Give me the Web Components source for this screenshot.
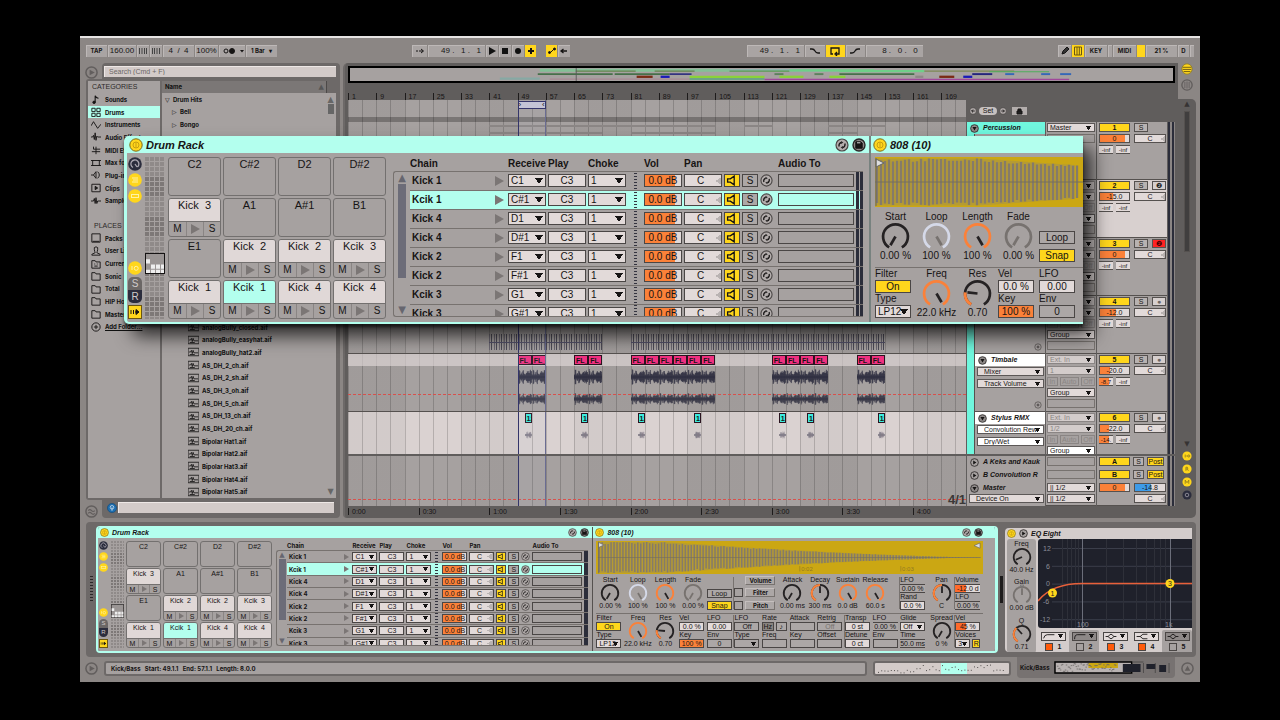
<!DOCTYPE html>
<html lang="en">
<head>
<meta charset="utf-8">
<title>Live set</title>
<style>
  body { margin: 0; background: #000; font-family: "Liberation Sans", Arial, sans-serif; }
</style>
</head>
<body>
<app-window></app-window>
<script>
const BASE = `
  *, *::before, *::after { box-sizing: border-box; }
  :host { display: block; font: 7px/9px "Liberation Sans", Arial, sans-serif; color: #161414; --win: #8b8684; --panel: #a6a1a0; --edge: #6d6968; --deep: #605d5c; --box: #e2dad9; --aqua: #b3ffee; --yel: #ffd61c; --org: #fb8139; }
  button, select, input { font: inherit; color: inherit; margin: 0; padding: 0; border: 0; border-radius: 0; background: none; min-width: 0; display: block; }
  button { text-align: center; white-space: nowrap; overflow: hidden; }
  select { appearance: none; white-space: nowrap; overflow: hidden; }
  svg { display: block; }
  .b { font-family: Inter, "Liberation Sans", sans-serif; font-weight: 700; font-size: 6px; }
`;
const ARROW = size => `conic-gradient(from -34deg at 50% 100%, #161414 68deg, #0000 0) no-repeat right 3px center / ${size}`;

function define(name, css, html) {
  customElements.define(name, class extends HTMLElement {
    connectedCallback() {
      if (this.shadowRoot) return;
      this.attachShadow({ mode: 'open' });
      const t = document.createElement('template');
      t.innerHTML = `<style>${BASE}${css}</style>${html(this)}`;
      this.shadowRoot.append(t.content.cloneNode(true));
    }
  });
}
const rep = (n, f) => Array.from({ length: n }, (_, i) => f(i)).join('');
let seed = 7;
const rnd = () => (seed = (seed * 16807) % 2147483647) / 2147483647;
const S = (box, body, extra = '') => `<svg viewBox="0 0 ${box}" ${extra} fill="none" stroke="#161414" aria-hidden="true">${body}</svg>`;

/* Round status lamps used in device headers and side strips. */
const LAMPS = {
  power: '<circle cx="7" cy="7" r="6.2" fill="#ffd61c" stroke="#7b6a1c"/><circle cx="7" cy="7" r="3" stroke="#c79f10"/><path d="M7 4.5v5" stroke="#c79f10"/>',
  macro: '<circle cx="7" cy="7" r="6.8" fill="#2b2d3d" stroke="none"/><path d="M5 10.5A4 4 0 1 1 9.5 10M7 7l2 3" stroke="#aaa6b0" stroke-width="1.3"/>',
  list: '<circle cx="7" cy="7" r="6.8" fill="#ffd61c" stroke="none"/><path d="M4 5h6M5 7h5M4 9h6" stroke="#fff2a6"/>',
  bar: '<circle cx="7" cy="7" r="6.8" fill="#ffd61c" stroke="none"/><rect x="3.5" y="5.5" width="7" height="3" stroke="#fff2a6"/>',
  io: '<circle cx="7" cy="7" r="6.8" fill="#ffd61c" stroke="none"/><path d="M4 5v4" stroke="#fff2a6"/><circle cx="8.2" cy="7.3" r="2" stroke="#fff2a6"/>',
  swap: '<circle cx="7" cy="7" r="6" fill="#b3adac" stroke="#4a4645" stroke-width="1.2"/><path d="M4.2 8.5a3 3 0 0 1 2-4M9.8 5.5a3 3 0 0 1-2 4" stroke-width="1.4"/><path d="M6 3l2.4 1.6L6 6zM8 8L5.6 9.4 8 11z" fill="#2b2828" stroke="none"/>',
  save: '<circle cx="7" cy="7" r="6" fill="#8d8887" stroke="#2b2828" stroke-width="1.4"/><path d="M3.8 3.8h5l1.4 1.4v5H3.8z" fill="#161414"/><path d="M5 4.8h3.4" stroke="#ddd"/>',
  play: '<circle cx="7" cy="7" r="6" fill="#a6a1a0" stroke="#2b2828" stroke-width="1.3"/><path d="M5 3.8l5 3.2-5 3.2z" fill="#161414" stroke="none"/>',
  down: '<circle cx="7" cy="7" r="6" fill="#8d8887" stroke="#2b2828" stroke-width="1.3"/><path d="M3.8 4.8h6.4L7 10z" fill="#161414" stroke="none"/>',
  plus: '<circle cx="7" cy="7" r="5.6" stroke="#3b3837"/><path d="M7 4.4v5.2M4.4 7h5.2"/>',
  left: '<circle cx="7" cy="7" r="5.8" fill="#b3adac" stroke="#3b3837"/><path d="M10 7H5M7 4.5L4.5 7 7 9.500" stroke-width="1.6"/>',
  right: '<circle cx="7" cy="7" r="5.8" fill="#b3adac" stroke="#3b3837"/><path d="M4 7h5M7 4.5L9.500 7 7 9.500" stroke-width="1.6"/>',
  ghost: '<circle cx="7" cy="7" r="6" fill="#8b8684" stroke="#625e5d" stroke-width="1.6"/><path d="M5 4l5.500 3L5 10z" fill="#625e5d" stroke="none"/>',
  wave: '<circle cx="7" cy="7" r="6" fill="#8b8684" stroke="#625e5d" stroke-width="1.6"/><path d="M3.5 6q1.700-2 3.500 0t3.500 0M3.500 9q1.700-2 3.500 0t3.500 0" stroke="#625e5d" stroke-width="1.300"/>',
  up: '<circle cx="7" cy="7" r="6" fill="#8b8684" stroke="#625e5d" stroke-width="1.6"/><path d="M7 4l3 5.500H4z" fill="#625e5d" stroke="none"/>',
  session: '<circle cx="7" cy="7" r="6" fill="#8b8684" stroke="#625e5d" stroke-width="1.6"/><path d="M4.500 3.500v7M7 3v8M9.500 3.500v7" stroke="#625e5d"/>',
  arrange: '<circle cx="7" cy="7" r="6" fill="#ffd61c" stroke="#8b7a2a" stroke-width="1"/><path d="M2 5h10M2 7.500h10M3 10h8" stroke="#5c4f14"/>',
  lampI: '<circle cx="7" cy="7" r="6.400" fill="#ffd61c" stroke="none"/><path d="M4.500 5v4M6 7h2" stroke="#7b6a1c"/><circle cx="9.500" cy="7" r="1.500" stroke="#7b6a1c"/>',
  lampR: '<circle cx="7" cy="7" r="6.400" fill="#ffd61c" stroke="none"/><path d="M5.500 9.500v-5h2q1.500 1.200 0 2.500h-2M7.500 7l1.500 2.500" stroke="#7b6a1c"/>',
  lampM: '<circle cx="7" cy="7" r="6.400" fill="#ffd61c" stroke="none"/><path d="M4.500 9.500v-5L7 8l2.500-3.500v5" stroke="#7b6a1c"/>',
  lampD: '<circle cx="7" cy="7" r="6.400" fill="#2b2d3d" stroke="none"/><circle cx="7" cy="7" r="2.500" stroke="#aaa6b0"/>',
  plug: '<circle cx="7" cy="7" r="6.400" fill="#1f6fb0" stroke="#174d7c"/><circle cx="7" cy="6" r="2.500" stroke="#dce9f4"/><path d="M7 6v5" stroke="#dce9f4"/>'
};
define('lamp-icon', `:host { flex: none; width: 11px; height: 11px; } svg { width: 100%; height: 100%; }`,
  el => S('14 14', LAMPS[el.getAttribute('kind')] || ''));

/* Rotary dial with its label above and its value below. */
define('dial-knob', `
  :host { text-align: center; white-space: nowrap; font-size: var(--fs, 7px); line-height: var(--lh, 8px); }
  div, output { display: block; height: var(--lh, 8px); overflow: visible; margin: 0 -6px; }
  svg { width: var(--knob, 18px); height: var(--knob, 18px); margin: 0 auto; overflow: visible; }`,
  el => {
    const v = +el.getAttribute('val'), lit = el.hasAttribute('lit');
    const tone = lit && v >= 100 ? '#fb8139' : el.getAttribute('tone') || '#252223';
    const arc = 'M5.300 18.100A9.200 9.200 0 1 1 14.700 18.100';
    return `<div>${el.getAttribute('label')}</div>` + S('20 20',
      `<path d="${arc}" stroke="${tone}" stroke-width="2"/>` +
      (lit && v < 100 ? `<path d="${arc}" pathLength="100" stroke-dasharray="${v} 200" stroke="#fb8139" stroke-width="2.200"/>` : '') +
      (el.hasAttribute('centre') ? '<path d="M8 -1h4l-2 3z" stroke="#777"/>' : '') +
      `<path d="M10 10V2.500" transform="rotate(${-150 + 3 * v} 10 10)" stroke="${el.hasAttribute('dim') ? '#77726f' : '#252223'}" stroke-width="2"/>`)
      + `<output>${el.getAttribute('value')}</output>`;
  });

/* ---------- transport bar ---------- */
define('tool-bar', `
  :host { display: flex; align-items: center; padding: 0 6px; height: 25px; background: var(--win); }
  div { display: flex; gap: 1px; }
  i { flex: 136 1 0; } i.w { flex-grow: 178; }
  button { height: 12px; line-height: 12px; background: #a9a4a3; box-shadow: inset 1px 1px #bdb8b7; font-size: 8px; display: flex; align-items: center; justify-content: center; }
  button.b { font-size: 6px; font-family: Inter, sans-serif; }
  button.y { background: var(--yel); box-shadow: none; }
  svg { width: 10px; height: 10px; }
  pre { font: inherit; margin: 0; }
`, () => {
  const b = (w, t, c = '', l = '') => `<button class="${c}" style="width:${w}px"${l ? ` aria-label="${l}"` : ''}>${t}</button>`;
  const g = d => S('10 10', d);
  return `<div>${b(21, 'TAP', 'b')}${b(28, '160.00')}${b(12, g('<path d="M1.500 2v6M4 2v6M6.500 2v6M8.500 2v6" stroke="#444"/>'), '', 'Nudge down')}${b(12, g('<path d="M1.500 2v6M3.500 2v6M6 2v6M8.500 2v6" stroke="#444"/>'), '', 'Nudge up')}${b(31, '4 &nbsp;/ &nbsp;4')}${b(23, '100%')}${b(26, S('26 10', '<circle cx="7" cy="5" r="2"/><circle cx="13" cy="5" r="2.500" fill="#161414"/><path d="M21 4h4l-2 2.500z" fill="#161414" stroke="none"/>', 'style="width:26px"'), '', 'Metronome')}${b(31, '1 Bar &nbsp; ▾', 'b')}</div>
  <i></i>
  <div>${b(15, g('<path d="M1 5h2m1 0h4M6 3l2.500 2L6 7"/>'), '', 'Follow')}${b(57, '<pre>    49 .   1 .   1</pre>')}${b(12, g('<path d="M2 1l7 4-7 4z" fill="#111" stroke="none"/>'), '', 'Play')}${b(12, g('<path d="M2 2h6v6H2z" fill="#111" stroke="none"/>'), '', 'Stop')}${b(12, g('<circle cx="5" cy="5" r="3" fill="#111" stroke="none"/>'), '', 'Record')}${b(11, g('<path d="M5 2v6M2 5h6" stroke-width="2"/>'), 'y', 'Overdub')}<span style="width:8px"></span>${b(11, g('<path d="M3 7L7 3"/><circle cx="2.500" cy="6.500" r="1" fill="#111"/><circle cx="7.500" cy="3" r="1" fill="#111"/>'), 'y', 'Automation arm')}${b(12, g('<path d="M2 5h6M4.500 3L2 5l2.500 2" stroke-width="1.300"/>'), '', 'Re-enable automation')}</div>
  <i class="w"></i>
  <div>${b(57, '<pre>    49 .   1 .   1</pre>')}${b(20, g('<path d="M0 3h2q2 0 3 2t3 2h2" stroke-width="1.300"/>'), '', 'Punch in')}${b(19, g('<path d="M3 8H1V2h8v6H6M7 6L5 8l2 2" stroke-width="1.300"/>'), 'y', 'Loop')}${b(19, g('<path d="M0 7h2q2 0 3-2t3-2h2" stroke-width="1.300"/>'), '', 'Punch out')}${b(57, '<pre>     8 .   0 .   0</pre>')}</div>
  <i></i>
  <div>${b(13, g('<path d="M2 8l1-3 4-4 2 2-4 4z" fill="#333"/>'), '', 'Draw')}${b(12, g('<path d="M1.500 1h7v8h-7zM4 1v5M6.300 1v5M4 6v3M6.300 6v3" stroke="#6b5710"/>'), 'y', 'Keyboard')}${b(22, 'KEY', 'b')}${b(4, '', '', 'Key in')}${b(23, 'MIDI', 'b')}${b(8, '', 'y', 'Load')}${b(31, '21 %', 'b')}${b(11, 'D', 'b')}${b(4, '', '', 'In')}</div>`;
});

/* ---------- browser ---------- */
const CAT = {
  note: '<path d="M5 10V2q1 3 4 3" stroke-width="1.300"/><circle cx="3.700" cy="10" r="1.500" fill="#161414"/>',
  drum: '<path d="M1 1.500h4v4H1zM7 1.500h4v4H7zM1 7.500h4v4H1zM7 7.500h4v4H7z"/>',
  inst: '<path d="M0 7L3 2l5 8 4-5"/>',
  fx: '<path d="M0 6h2l1-2 1 5 1-8 1 9 1-5 1 1h4"/>',
  midi: '<path d="M1 8h10M3 5h8M6 2v9M3 2v3"/>',
  max: '<path d="M2 3h8v6H2zM0 3h3M0 9h3M9 3h3M9 9h3"/>',
  plug: '<path d="M0 6h3l3-4v8L3 6M8 2q4 4 0 8"/>',
  clip: '<path d="M1 1.500h10v9H1z"/><path d="M5 4l3 2-3 2z" fill="#161414"/>',
  samp: '<path d="M0 6h3l1-3 1 6 1-7 1 7 1-3h4"/>',
  pack: '<path d="M1 1h10v10H1zM2 10h8" />',
  user: '<path d="M6 1q-3 0-2 3.500Q4.500 7 5 8L1 10v1h10v-1L7 8q.5-1 1-3.500Q9 1 6 1z"/>',
  cur: '<path d="M1 2h4l1 1.500h5V11H1zM4 6h1m2 0h1M4 8.500h4"/>',
  fold: '<path d="M1 2h4l1 1.500h5V11H1z"/>',
  add: '<circle cx="6" cy="6" r="5"/><path d="M6 3.500v5M3.500 6h5"/>',
  file: '<path d="M0 1.500h13v9H0z"/><path d="M1 6h2l1-2 1 4 1-4 1 3h5M2 9h6"/>'
};
define('browser-pane', `
  :host { display: grid; grid-template-columns: 1fr; grid-template-rows: 16px 1fr 18px; padding: 0 3px 0 6px; color: #111; }
  .top, .foot { display: grid; grid-template-columns: 16px 1fr; }
  .top lamp-icon, .foot lamp-icon { width: 13px; height: 13px; margin-left: -1px; }
  .tab { background: var(--edge); border-radius: 4px 4px 0 0; padding: 3px 4px 2px 2px; }
  input { display: block; width: 100%; height: 11px; background: #d3cbc9; padding: 0 5px; box-shadow: inset 1px 1px #eee8e6; line-height: 11px; }
  input::placeholder { color: #6b6665; opacity: 1; }
  .mid { background: var(--edge); padding: 2px 4px 2px 2px; display: grid; grid-template-columns: 72px 1fr; gap: 2px; border-radius: 3px 0 0 3px; }
  .cats, .files { background: var(--panel); display: flex; flex-direction: column; min-width: 0; }
  h3 { font: 7px/12px "Liberation Sans", sans-serif; margin: 0; padding-left: 4px; color: #2c2929; }
  ul { list-style: none; margin: 0; padding: 0; display: flex; flex-direction: column; }
  .cats ul { height: 114px; } .cats ul.pl { height: 101px; } .cats h3.p { margin-top: 13px; padding-left: 6px; }
  li { flex: 1 1 0; display: flex; align-items: center; gap: 4px; padding-left: 3px; white-space: nowrap; min-height: 0; line-height: 9px; }
  li svg { width: 10px; height: 10px; flex: none; }
  li.on { background: var(--aqua); }
  .head { display: grid; grid-template-columns: 1fr 10px; height: 12px; line-height: 12px; background: #7b7776; padding-left: 3px; }
  .head span + span { border-left: 1px solid #4c4948; background: var(--edge); }
  .head em { float: right; font: 7px/12px "DejaVu Sans"; color: #555; margin-right: 2px; }
  .body { flex: 1; display: grid; grid-template-columns: 1fr 11px; }
  .body li { gap: 3px; } .body li i { font-style: normal; width: 5px; font-family: "DejaVu Sans"; font-weight: 400; }
  .l1 { padding-left: 10px; } .l3 { padding-left: 26px; } .l3 svg { width: 11px; }
  .gap { flex: 15 1 0; }
  .bar { display: flex; flex-direction: column; align-items: center; color: #666; font: 8px/9px "DejaVu Sans"; padding: 2px 0; }
  .bar b { width: 6px; height: 10px; background: #666; } .bar span:last-child { margin-top: auto; }
  .foot .tab { border-radius: 0 0 4px 4px; padding: 3px 6px 4px 3px; display: grid; grid-template-columns: 13px 1fr; }
  .foot .tab lamp-icon { width: 10px; height: 10px; margin: 1px 0 0 2px; } .foot { margin-top: -1px; }
  .foot > lamp-icon { align-self: end; }
`, () => {
  const li = (k, t, c = '') => `<li class="b ${c}">${S('12 12', CAT[k], 'stroke-width="1.100"')}${t}</li>`;
  const f = t => `<li class="b l3">${S('13 12', CAT.file)}${t}</li>`;
  return `<div class="top"><lamp-icon kind="ghost" style="align-self:end"></lamp-icon><div class="tab"><input type="search" placeholder="Search (Cmd + F)" aria-label="Search"></div></div>
  <div class="mid"><div class="cats"><h3>CATEGORIES</h3><ul>${li('note', 'Sounds')}${li('drum', 'Drums', 'on')}${li('inst', 'Instruments')}${li('fx', 'Audio Effects')}${li('midi', 'MIDI Effects')}${li('max', 'Max for Live')}${li('plug', 'Plug-ins')}${li('clip', 'Clips')}${li('samp', 'Samples')}</ul>
  <h3 class="p">PLACES</h3><ul class="pl">${li('pack', 'Packs')}${li('user', 'User Library')}${li('cur', 'Current')}${li('fold', 'Sonic')}${li('fold', 'Total')}${li('fold', 'HIP Hop')}${li('fold', 'Master')}${li('add', '<u>Add Folder...</u>')}</ul></div>
  <div class="files"><div class="head b"><span>Name<em>▲</em></span><span></span></div><div class="body"><ul>
  <li class="b"><i>▽</i>Drum Hits</li><li class="b l1"><i>▷</i>Bell</li><li class="b l1"><i>▷</i>Bongo</li><li class="gap"></li>
  ${['analogBully_closed.aif', 'analogBully_easyhat.aif', 'analogBully_hat2.aif', 'AS_DH_2_ch.aif', 'AS_DH_2_sh.aif', 'AS_DH_3_oh.aif', 'AS_DH_5_ch.aif', 'AS_DH_13_ch.aif', 'AS_DH_20_ch.aif', 'Bipolar Hat1.aif', 'Bipolar Hat2.aif', 'Bipolar Hat3.aif', 'Bipolar Hat4.aif', 'Bipolar Hat5.aif'].map(f).join('')}
  </ul><div class="bar"><span>▲</span><b></b><span>▼</span></div></div></div></div>
  <div class="foot"><lamp-icon kind="wave"></lamp-icon><div class="tab"><lamp-icon kind="plug"></lamp-icon><input aria-label="Preview"></div></div>`;
});

/* ---------- arrangement ---------- */
const LANE = `
  .lane { position: relative; display: grid; grid-template-columns: repeat(175, minmax(0, 1fr)); grid-template-rows: 100%; min-width: 0; overflow: hidden; }
  .lane > * { grid-row: 1; }
  .grid { background: repeating-linear-gradient(to right, #0000002c 0 1px, #0000 1px 2.286%), repeating-linear-gradient(to right, #00000009 0 9.143%, #0000 9.143% 18.286%), var(--lane, #a6a1a0); }
  .sel { grid-column: 49 / 57; border-left: 1px solid #34356a; border-right: 1px solid #6a6c92; background: #b8c0e012; z-index: 2; }
`;
define('track-mixer', `
  :host { display: grid; grid-template-columns: 78px 50px 70px 7px; column-gap: 1px; background: var(--deep); padding-left: 1px; min-width: 0; }
  :host > div { min-width: 0; }
  .name { display: grid; grid-template-columns: 1fr; background: var(--panel); align-content: start; }
  .name.kid { grid-template-columns: 8px 1fr; align-content: stretch; }
  .name.grp { grid-template-rows: 12px 1fr; }
  .strip { background: #70f7de; border-right: 1px solid #55514f; }
  .title { display: flex; align-items: center; gap: 4px; height: 12px; padding-left: 3px; font: italic 700 7px/12px "Liberation Sans", sans-serif; white-space: nowrap; overflow: hidden; }
  .title lamp-icon { width: 9px; height: 9px; }
  .kid .body .title { background: #fff; margin-bottom: 1px; }
  .body { display: flex; flex-direction: column; border-bottom: 1px solid #55514f; min-width: 0; }
  .body select { margin: 0 1px 3px 2px; }
  .body > lamp-icon { width: 8px; height: 8px; align-self: flex-end; margin: 10px 3px 0; }
  select, .box { height: 9px; line-height: 8px; border: 1px solid #5c5857; background: ${ARROW('5px 4px')}, var(--sbg, var(--box)); padding: 0 0 0 2px; min-width: 0; }
  .body select { padding-left: 6px; }
  .io { display: flex; flex-direction: column; justify-content: space-between; padding: 1px 1px 3px; background: var(--panel); border-bottom: 1px solid #55514f; }
  .io .row { display: flex; gap: 2px; } .io .row button { flex: 1 1 auto; }
  .mix { display: flex; flex-direction: column; gap: 2px; padding: 1px 2px; background: var(--mbg, var(--panel)); border-bottom: 1px solid #55514f; }
  .mix .row { display: grid; grid-template-columns: 31px 14px 14px; gap: 4px; } .mix .row.two { grid-template-columns: 31px 32px; } .mix .row.three { grid-template-columns: 14px 14px; gap: 3px; } .mix .row.ret { grid-template-columns: 31px 11px 17px; gap: 3px; }
  button { height: 9px; line-height: 8px; border: 1px solid #55514f; background: #b8b2b1; font-size: 7px; }
  .three button { border-width: 1px 0; font-size: 6px; }
  button.no { background: var(--yel); font-weight: 700; } .val { background: linear-gradient(to right, var(--c, var(--org)) var(--v, 0%), var(--box) 0); }
  .box { background: none; border: 1px solid #77726f; } .dim { color: #8a8584; border-color: #8a8584; background-color: #d3cccb; } .row .dim { background: none; }
  .met { background: repeating-linear-gradient(to right, #2b2d3a 0 2px, #8a8584 2px 4px); }
  .a { background: conic-gradient(from 60deg at 0% 50%, #b9b3b2 60deg, #0000 0) no-repeat right 0 center / 5px 6px, var(--box); }
`, el => {
  const a = n => el.getAttribute(n) || '', kind = a('kind');
  const sel = (l, t, c = '') => `<select class="${c}" aria-label="${l}"><option>${t}</option></select>`;
  const title = (i, s = '') => `<div class="title" style="${s}"><lamp-icon kind="${i}"></lamp-icon><span>${a('name')}</span></div>`;
  if (kind === 'return') return `<div class="name">${title('play')}</div><div class="io"><div class="box"></div></div><div class="mix"><div class="row ret"><button class="no">${a('no')}</button><button>S</button><button style="background:var(--yel)">Post</button></div></div><div class="met"></div>`;
  if (kind === 'master') return `<div class="name">${title('down')}<div class="body" style="border:0">${sel('Device', 'Device On')}</div></div><div class="io" style="padding-bottom:2px">${sel('Cue out', '|| 1/2')}${sel('Master out', '|| 1/2')}</div><div class="mix"><div class="row two"><button class="val" style="--v:85%">0</button><button class="val" style="--c:#3d9be8;--v:52%">-14.8</button></div><div class="row two"><span></span><button class="a">C</button></div></div><div class="met"></div>`;
  const group = kind === 'group';
  const dev = a('dev') ? a('dev').split('|') : null, io = a('io').split('|');
  const head = group
    ? `<div class="name kid grp">${title('down', 'grid-column:1/3;background:#70f7de')}<div class="strip"></div><div class="body"></div></div>`
    : `<div class="name kid"><div class="strip"></div><div class="body">${a('name') ? title('down') : '<div style="height:13px"></div>'}${dev ? dev.map((d, i) => sel('Device ' + (i + 1), d)).join('') : '<div style="height:24px"></div>'}<lamp-icon kind="plus"></lamp-icon></div></div>`;
  const ioCol = group
    ? `${sel('Output', 'Master')}<div class="box"></div><span style="flex:1"></span>`
    : `${sel('Input', io[0] || '', 'dim')}${sel('Channel', io[1] || '', 'dim')}<div class="row"><button class="dim">In</button><button class="dim">Auto</button><button class="dim">Off</button></div>${sel('Output', 'Group')}<div class="box"></div>`;
  return `${head}<div class="io"${group ? ' style="gap:2px"' : ''}>${ioCol}</div>
  <div class="mix"><div class="row"><button class="no">${a('no')}</button><button>S</button>${group ? '' : `<button aria-label="Arm" style="color:${a('arm') === 'red' ? '#400' : a('arm') ? '#222' : '#6b6665'};background:${a('arm') === 'red' ? '#f22' : '#d6cfce'}">${a('arm') ? '❷' : '●'}</button>`}</div>
  <div class="row two"><button class="val" style="--v:${a('v')}">${a('vol')}</button><button class="a">C</button></div>
  <div class="row three"><button class="val" style="--v:${a('pk') ? '75%' : '0%'}">${a('pk') || '-inf'}</button><button style="background:var(--box)">-inf</button></div></div><div class="met"></div>`;
});

define('clip-block', `
  :host { align-self: start; height: 12px; padding-top: 1px; z-index: 1; min-width: 0; }
  span { display: block; height: 10px; border: 1px solid #2a1420; background: var(--c); font-weight: 700; line-height: 9px; padding-left: 1px; overflow: hidden; white-space: nowrap; }
`, el => `<span>${el.getAttribute('label')}</span>`);

define('clip-wave', `
  :host { z-index: 1; align-self: start; margin-top: var(--y); height: var(--h); min-width: 0; }
  svg { width: 100%; height: 100%; }`,
  el => {
    let d = '';
    const quiet = el.hasAttribute('quiet');
    const shape = [2, 3, 8, 7, 2, 3, 5, 3, 2, 6, 7, 4, 3, 3, 2, 3, 4, 5, 6, 5, 4, 6, 5, 4, 7, 6, 6, 3];
    for (let x = 0; x < 28; x++) {
      const a = quiet ? 1 + rnd() * (x > 4 && x < 24 ? 6 : 1) : shape[x] * (.8 + rnd() * .25);
      d += `M${x + 0.5} ${(8 - a).toFixed(1)}V${(8 + a).toFixed(1)}`;
    }
    return `<svg viewBox="0 0 28 16" preserveAspectRatio="none" aria-hidden="true"><path d="M0 8h28${d}" stroke="${quiet ? '#77727e' : '#2a2a3c'}" stroke-width="1"/></svg>`;
  });

define('arrange-view', LANE + `
  :host { display: grid; grid-template-columns: minmax(0, 1fr) 18px; background: var(--win); }
  .main { background: var(--deep); border-left: 2px solid var(--edge); border-radius: 5px 0 0 4px; padding: 3px 3px 1px; display: flex; flex-direction: column; min-width: 0; }
  .over { height: 17px; border: 2px solid #000; background: var(--panel); }
  .over svg { width: 100%; height: 100%; }
  .row { display: grid; grid-template-columns: minmax(0, 1fr) 209px; flex: none; }
  .ruler { height: 17px; align-items: end; font-size: 7px; line-height: 9px; }
  .ruler span, .time span { border-left: 1px solid #1d1b1b; padding-left: 3px; white-space: nowrap; align-self: end; line-height: 7px; overflow: visible; }
  .time span { align-self: start; margin-top: 2px; }
  .scrub { height: 17px; } .gapline { height: 5px; --lane: #7a7675; }
  .brace { grid-column: 49 / 57; align-self: start; height: 8px; margin-top: 1px; background: #c4c4d6; border: 1px solid #34356a; z-index: 3; display: flex; justify-content: space-between; font-size: 8px; line-height: 6px; overflow: hidden; }
  .tracks { height: 332px; overflow: hidden; display: flex; flex-direction: column; flex: none; }
  .tracks .row { height: 58px; }
  .tracks .lane, .ret .lane { border-bottom: 1px solid #55514f; }
  .tint { grid-column: 1 / -1; height: 12px; background: #e6dedd99; }
  .auto { grid-column: 1 / -1; align-self: start; height: 0; border-top: 1px dashed #d8504c; z-index: 1; }
  .midi { align-self: end; height: 16px; margin-bottom: 3px; background: linear-gradient(#55526a, #55526a) no-repeat center / 100% 1px, repeating-linear-gradient(to right, #6b6772 0 1px, #0000 1px 2px, #4c4a56 2px 3px, #0000 3px 5px); z-index: 1; }
  .ghost { align-self: start; height: 2px; background: #8b8685; }
  .ret { height: 13px; } .mast { height: 24px; }
  .set { display: flex; align-items: center; gap: 2px; padding-left: 3px; padding-top: 5px; }
  .set lamp-icon { width: 8px; height: 8px; }
  .set button { height: 8px; width: 18px; border-radius: 4px; background: #c6c0bf; line-height: 8px; } .set button:last-child { border-radius: 0; width: 15px; background: #b3adac; margin-left: 3px; }
  .beat { grid-column: 150 / -1; justify-self: end; align-self: end; font: 700 13px/13px "Liberation Sans"; color: #3b3837; z-index: 2; }
  .side { display: flex; flex-direction: column; align-items: center; }
  .side .top lamp-icon { width: 12px; height: 12px; }
  .side .top { display: flex; flex-direction: column; gap: 4px; height: 36px; }
  .side .rail { flex: 1; width: 100%; background: var(--deep); border-radius: 0 5px 5px 0; display: flex; flex-direction: column; align-items: center; font: 7px/8px "DejaVu Sans"; color: #363333; padding: 1px 0 18px; gap: 3px; }
  .side .rail i { width: 6px; height: 141px; background: #403e3e; border: 1px solid #55514f; } .side .rail span + i + span { margin-top: auto; }
  .side .rail lamp-icon { width: 10px; height: 10px; }
`, () => {
  const sel = '<div class="sel"></div>';
  const lane = (inner, attr = '') => `<div class="lane grid"${attr}>${inner}${sel}</div>`;
  const pl = [49, 53, 65, 69, 81, 85, 89, 93, 97, 101, 121, 125, 129, 133, 145, 149];
  const cy = [51, 67, 83, 99, 123, 131, 151];
  const ghosts = [[41, 105, 3], [113, 121, 3], [137, 153, 3], [41, 73, 10], [81, 105, 10], [137, 145, 10]].map(g => `<div class="ghost" style="grid-column:${g[0]}/${g[1]};margin-top:${g[2]}px"></div>`).join('');
  let segs = '';
  const seg = (x, w, y, h, c) => segs += `<path d="M${x} ${y}h${w}" stroke="${c}" stroke-width="${h}"/>`;
  seg(190, 190, 3, 4, '#83c096'); seg(380, 110, 3, 3, '#86b9ae'); seg(226, 60, 4, 1.500, '#6d7f52'); seg(305, 40, 4, 1.500, '#6d7f52'); seg(380, 60, 4, 1.500, '#5d9a50'); seg(440, 85, 3, 3, '#6fcf88'); seg(490, 85, 4, 3, '#6fcf88'); seg(575, 90, 4, 1.500, '#7d8a55'); seg(640, 60, 5, 1.200, '#4fae5c'); seg(150, 40, 14, 3, '#86a9a4');
  seg(188, 75, 8, 2, '#46704a'); seg(265, 55, 8, 2, '#46704a'); seg(320, 22, 8, 2, '#25257c'); seg(425, 9, 8, 2.500, '#5d805d'); seg(465, 9, 8, 2.500, '#5d805d'); seg(490, 75, 8, 2, '#46704a'); seg(623, 20, 8, 2.500, '#25257c'); seg(656, 9, 8, 2.500, '#3567b8'); seg(692, 9, 8, 2.500, '#3567b8'); seg(711, 11, 8, 2.500, '#3567b8');
  seg(287, 16, 11.500, 3, '#7a2a14'); seg(311, 9, 11.500, 3, '#1a1ab8'); seg(340, 75, 11.500, 3, '#8ad238'); seg(430, 24, 11.500, 3, '#8ad238'); seg(480, 16, 11.500, 3, '#8ad238'); seg(566, 8, 11.500, 3, '#8d8887'); seg(590, 15, 11.500, 3, '#7a2a14'); seg(614, 9, 11.500, 3, '#1a1ab8');
  seg(200, 140, 14.500, 1.500, '#a98a94'); seg(340, 75, 14.500, 2, '#5aa57c'); seg(415, 305, 15, 2, '#a0489a');
  return `<div class="main">
  <div class="over"><svg viewBox="0 0 824 17" preserveAspectRatio="none" aria-hidden="true">${segs}<path d="M226.500 0v17" stroke="#555"/></svg></div>
  <div class="row"><div class="lane ruler">${rep(22, i => `<span style="grid-column:${1 + i * 8}/span ${i === 21 ? 7 : 8}">${1 + i * 8}</span>`)}</div><div></div></div>
  <div class="row scrub">${lane('<div class="brace"><span>›</span><span>‹</span></div>')}<div class="set"><lamp-icon kind="left"></lamp-icon><button>Set</button><lamp-icon kind="right"></lamp-icon><button aria-label="Lock envelopes">${S('15 8', '<path d="M5 4h5v3H5zM6 4V2h3v2" fill="#222"/>')}</button></div></div>
  <div class="row gapline">${lane('')}<div></div></div>
  <div class="tracks">
    <div class="row">${lane(ghosts)}<track-mixer kind="group" name="Percussion" no="1" v="85%" vol="0"></track-mixer></div>
    <div class="row">${lane('')}<track-mixer no="2" v="45%" vol="-15.0" arm="1" style="--mbg:#d8d0cf;--sbg:#eee8e7"></track-mixer></div>
    <div class="row">${lane('')}<track-mixer no="3" v="85%" vol="0" arm="red"></track-mixer></div>
    <div class="row">${lane('<div class="midi" style="grid-column:41/73"></div><div class="midi" style="grid-column:81/153"></div>')}<track-mixer no="4" v="55%" vol="-12.0"></track-mixer></div>
    <div class="row">${lane('<div class="tint"></div><div class="auto" style="margin-top:40px"></div>' + pl.map(b => `<clip-block label="FL_" style="grid-column:${b}/${b + 4};--c:#f0307f"></clip-block><clip-wave style="grid-column:${b}/${b + 4};--y:15px;--h:16px"></clip-wave><clip-wave style="grid-column:${b}/${b + 4};--y:39px;--h:12px"></clip-wave>`).join(''))}<track-mixer name="Timbale" no="5" dev="Mixer|Track Volume" io="Ext. In|1" v="35%" vol="-20.0" pk="-8.7"></track-mixer></div>
    <div class="row">${lane(cy.map(b => `<clip-block label="12" style="grid-column:${b}/${b + 2};--c:#3cecdf"></clip-block><clip-wave quiet style="grid-column:${b}/${b + 2};--y:19px;--h:8px"></clip-wave>`).join(''), ' style="--lane:#dad2d1"')}<track-mixer name="Stylus RMX" no="6" dev="Convolution Rew|Dry/Wet" io="Ext. In|1/2" v="32%" vol="-22.0" pk="-14." style="--sbg:#fff"></track-mixer></div>
  </div>
  <div style="height:2px;flex:none"></div>
  <div class="row ret">${lane('')}<track-mixer kind="return" name="A Keks and Kauk" no="A"></track-mixer></div>
  <div class="row ret">${lane('')}<track-mixer kind="return" name="B Convolution R" no="B"></track-mixer></div>
  <div class="row mast">${lane('<div class="auto" style="margin-top:17px"></div><div class="beat">4/1</div>')}<track-mixer kind="master" name="Master"></track-mixer></div>
  <div class="row"><div class="lane time">${rep(9, i => `<span style="grid-column:${1 + i * 20}/span ${i === 8 ? 15 : 20}">${Math.floor(i / 2)}:${i % 2 ? '30' : '00'}</span>`)}</div><div></div></div>
  </div>
  <div class="side"><div class="top"><lamp-icon kind="arrange"></lamp-icon><lamp-icon kind="session"></lamp-icon></div><div class="rail"><span>▲</span><i></i><span>▼</span><lamp-icon kind="lampI"></lamp-icon><lamp-icon kind="lampR"></lamp-icon><lamp-icon kind="lampM"></lamp-icon><lamp-icon kind="lampD"></lamp-icon></div></div>`;
});

/* ---------- devices ---------- */
const DEVICE = `
  :host { --fs: 7px; --fb: 6px; --bf: Inter, sans-serif; --lh: 8px; --ch: 9px; --hd: 11px; --bh: 113px; --lamp: 9px; --tri: 5px 4px; --pad: 3px; --knob: 18px; font-size: var(--fs); min-width: 0; }
  :host([size=large]) { --fs: 10px; --fb: 10px; --bf: "Liberation Sans", sans-serif; --lh: 12px; --ch: 13px; --hd: 17px; --bh: 169px; --lamp: 14px; --tri: 8px 6px; --pad: 4px; --knob: 27px; }
  header { display: flex; align-items: center; gap: 3px; height: var(--hd); background: var(--aqua); padding: 0 3px 0 2px; }
  h2 { font: italic 700 7px/9px "Liberation Sans", sans-serif; margin: 0 auto 0 0; white-space: nowrap; }
  :host([size=large]) h2 { font-size: 11px; line-height: 14px; }
  lamp-icon { width: var(--lamp); height: var(--lamp); }
  .body { height: var(--bh); background: var(--panel); padding: var(--pad) 0 3px; }
  button, select, .box { height: var(--ch); line-height: calc(var(--ch) - 2px); border: 1px solid #4a4645; background: #aca7a6; width: 100%; }
  select { background: conic-gradient(from -34deg at 50% 100%, #161414 68deg, #0000 0) no-repeat right 2px center / var(--tri), var(--box); padding-left: 2px; }
  .y { background: var(--yel); } .o { background: var(--org); } .w { background: var(--box); }
`;
const PADS = [['C2'], ['C#2'], ['D2'], ['D#2'], ['Kick 3', 1], ['A1'], ['A#1'], ['B1'], ['E1'], ['Kick 2', 1], ['Kick 2', 1], ['Kcik 3', 1], ['Kick 1', 1], ['Kcik 1', 2], ['Kick 4', 1], ['Kick 4', 1]];
const CHAINS = [['Kick 1', 'C1'], ['Kcik 1', 'C#1'], ['Kick 4', 'D1'], ['Kick 4', 'D#1'], ['Kick 2', 'F1'], ['Kick 2', 'F#1'], ['Kcik 3', 'G1'], ['Kick 3', 'G#1']];

define('drum-rack', DEVICE + `
  :host { --side: 11px; --map: 13px; --cell: 3px; --pw: 35px; --pgx: 2px; --pgy: 1px; --pbtn: 9px; --pf: 7px; --ml: 0px; --sc: 11px; --cg: 2px; --hh: 9px; --end: 4px; --ta: 5px; --tb: 3px;
    --cols: 1fr 8px 25px 25px 25px 7px 25px 25px 10px 11px 9px 50px 4px; }
  :host([size=large]) { --side: 16px; --map: 20px; --cell: 5px; --pw: 53px; --pgx: 2px; --pgy: 2px; --pbtn: 15px; --pf: 11px; --ml: 1px; --sc: 17px; --cg: 5px; --hh: 14px; --end: 6px; --ta: 9px; --tb: 5px;
    --cols: 1fr 14px 38px 38px 38px 14px 38px 38px 16px 16px 16px 76px 7px; }
  .body { display: grid; grid-template-columns: var(--side) var(--map) auto minmax(0, 1fr); column-gap: 2px; padding-right: var(--end); }
  .side { display: flex; flex-direction: column; gap: 2px; align-items: center; }
  .side .mt { margin-top: auto; }
  .tag { width: var(--lamp); height: var(--ch); background: #2b2d3d; color: #cfcbca; text-align: center; border-radius: 0 0 5px 5px; font-size: var(--fb); line-height: var(--ch); }
  .tag.g { background: #6b6766; border-radius: 5px 5px 0 0; margin-bottom: -2px; }
  .side svg { width: var(--lamp); height: var(--lamp); background: var(--yel); border: 1px solid #6b5710; }
  .map { background: repeating-linear-gradient(to right, #0000 0 calc(var(--cell) - 1px), var(--panel) 0 var(--cell)), repeating-linear-gradient(#0000 0 calc(var(--cell) - 1px), var(--panel) 0 var(--cell)), repeating-linear-gradient(#8f8a89 0 calc(var(--cell) * 4), #7d7877 0 calc(var(--cell) * 8)); display: grid; grid-template-rows: 59% 13% 1fr; }
  .map svg { grid-row: 2; width: 100%; height: 100%; }
  .pads { display: grid; grid-template-columns: repeat(4, var(--pw)); grid-template-rows: repeat(4, minmax(0, 1fr)); gap: var(--pgy) var(--pgx); margin-left: var(--ml); font-size: var(--pf); }
  .p { border: 1px solid #73706f; border-radius: 3px; text-align: center; display: flex; flex-direction: column; line-height: var(--ch); white-space: pre; overflow: hidden; background: var(--panel); min-height: 0; }
  .p > span { flex: 1; min-height: 0; }
  .p.on > span { background: #e0d8d7; } .p.sel > span { background: var(--aqua); }
  .p div { display: grid; grid-template-columns: repeat(3, 1fr); height: var(--pbtn); flex: none; border-top: 1px solid #73706f; }
  .p button { border: 0; height: 100%; background: none; font-size: var(--fs); line-height: 100%; }
  .p button + button { border-left: 1px solid #8a8584; }
  .t { display: block; width: 0; height: 0; justify-self: center; align-self: center; border-left: var(--ta) solid #7b7675; border-top: var(--tb) solid #0000; border-bottom: var(--tb) solid #0000; }
  .p .t { margin: auto; }
  .chain { margin-left: var(--cg); display: grid; grid-template-rows: var(--hh) minmax(0, 1fr); padding-bottom: 2px; min-width: 0; }
  .cols { display: grid; grid-template-columns: var(--cols); column-gap: 2px; align-items: center; }
  .hdr { margin-left: var(--sc); font: 700 var(--fb)/var(--hh) var(--bf); white-space: nowrap; }
  .hdr span { width: 0; }
  .frame { border: 1px solid #77726f; border-right: 0; border-radius: 3px 0 0 3px; display: grid; grid-template-columns: calc(var(--sc) - 1px) minmax(0, 1fr); min-height: 0; overflow: hidden; }
  .scroll { display: flex; flex-direction: column; align-items: center; color: #66666f; font-size: var(--fs); line-height: var(--lh); font-family: "DejaVu Sans"; min-height: 0; }
  .scroll i { width: 70%; max-width: 8px; height: 65%; background: #6c6c78; } .scroll span:last-child { margin-top: auto; }
  .rows { display: flex; flex-direction: column; overflow: hidden; min-height: 0; }
  .r { flex: 0 0 13.16%; border-bottom: 1px solid #77726f; }
  .r.sel { background: var(--aqua); }
  .r b { font: 700 var(--fb)/var(--ch) var(--bf); padding-left: 2px; white-space: nowrap; }
  .dots { width: 3px; height: 90%; justify-self: center; background: repeating-linear-gradient(#33333f 0 1px, #0000 1px 3px); }
  .vol { background: linear-gradient(to right, var(--org) 84%, var(--box) 0); }
  .a { background: conic-gradient(from 60deg at 0% 50%, #b9b3b2 60deg, #0000 0) no-repeat right 0 center / 6px 8px, var(--box); padding-right: 5px; }
  .r lamp-icon { width: var(--ch); height: var(--ch); }
  .m { height: 100%; background: linear-gradient(to right, #2b2d3a 42%, #0000 0 58%, #2b2d3a 0); }
  .r button svg { width: 100%; height: 100%; } .box { background: none; }
`, () => `<header><lamp-icon kind="power"></lamp-icon><h2>Drum Rack</h2><lamp-icon kind="swap"></lamp-icon><lamp-icon kind="save"></lamp-icon></header>
<div class="body"><div class="side"><lamp-icon kind="macro"></lamp-icon><lamp-icon kind="list"></lamp-icon><lamp-icon kind="bar"></lamp-icon><lamp-icon kind="io" class="mt"></lamp-icon><span class="tag g">S</span><span class="tag">R</span>${S('12 12', '<path d="M2 4v4M4.500 4v4M6 6h4M7 3.500L10 6 7 8.500z" fill="#161414"/>')}</div>
<div class="map">${S('20 20', '<path d="M.5.5h19v19H.5z" fill="#9a9594"/><path d="M1 6h4v4H1zM6 11h4v4H6zM11 11h4v4h-4zM16 11h3v4h-3zM1 16h4v3H1zM6 16h4v3H6zM11 16h4v3h-4zM16 16h3v3h-3z" fill="#eee" stroke="none"/>', 'preserveAspectRatio="none"')}</div>
<div class="pads">${PADS.map(([n, s]) => `<div class="p ${s ? 'on' : ''} ${s === 2 ? 'sel' : ''}"><span>${n.replace(' ', '  ')}</span>${s ? '<div><button>M</button><button aria-label="Preview"><span class="t"></span></button><button>S</button></div>' : ''}</div>`).join('')}</div>
<div class="chain"><div class="cols hdr"><span>Chain</span><i></i><span>Receive</span><span>Play</span><span>Choke</span><i></i><span>Vol</span><span>Pan</span><i></i><i></i><i></i><span>Audio To</span></div>
<div class="frame"><div class="scroll"><span>▲</span><i></i><span>▼</span></div><div class="rows">${CHAINS.map(([n, r], i) => `<div class="cols r ${i === 1 ? 'sel' : ''}"><b>${n}</b><span class="t"></span><select aria-label="Receive"><option>${r}</option></select><button class="w">C3</button><select aria-label="Choke"><option>1</option></select><span class="dots"></span><button class="vol">0.0 dB</button><button class="a">C</button><button class="y" aria-label="Activator">${S('12 10', '<path d="M2 3.500h2.500L8 1v8L4.500 6.500H2z" stroke-width="1.200"/>')}</button><button>S</button><lamp-icon kind="swap"></lamp-icon><div class="box"></div><span class="m"></span></div>`).join('')}</div></div></div></div>`);

define('sample-view', `
  :host { background: #cba713; overflow: hidden; min-width: 0; }
  svg { height: 100%; width: 100%; }`,
  el => {
    const part = el.hasAttribute('part-view'), end = part ? 208 : 580;
    const env = x => { const t = x / 580; return t < .18 ? 23.5 : Math.max(.5, 23.5 * Math.pow(1 - (t - .18) / .84, 1.500)); };
    let d = '', top = '', bot = '';
    for (let x = 2; x < end - 4; x += part ? 4 : 4.500) {
      const up = env(x) * (.86 + rnd() * .14), dn = env(x) * (.86 + rnd() * .14);
      d += `M${x} ${(25 - up).toFixed(1)}V${(25 + dn).toFixed(1)}`;
    }
    for (let x = 0; x <= end; x += 20) { top += `L${x} ${(25 - env(x)).toFixed(1)}`; bot = `L${x} ${(25 + env(x)).toFixed(1)}` + bot; }
    const marks = part ? '' : '<text x="308" y="46" font-size="9" fill="#927a22">0:02</text><text x="461" y="46" font-size="9" fill="#927a22">0:03</text><path d="M306 38v8M459 38v8" stroke="#927a22"/><path d="M579 3l-9 4 9 4z" fill="#ddd" stroke="#666"/>';
    return `<svg viewBox="0 0 ${end} 50" preserveAspectRatio="${part ? 'none' : 'xMidYMid meet'}" aria-hidden="true"><path d="M0 25${top}${bot}Z" fill="#b59b33"/><path d="${d}" fill="none" stroke="#857b69" stroke-width="2.300"/><path d="M0 25h${end}" stroke="#77705c" fill="none"/><path d="M1 1v48M1 2l8 4-8 4z" fill="#ddd" stroke="#666"/>${marks}</svg>`;
  });

define('sampler-device', DEVICE + `
  :host { --wave: 33px; --g1: 2px; --sg: 3px; --grid1: repeat(5, 1fr) 1.6fr repeat(4, 1fr) .4fr repeat(3, 1fr); --grid2: repeat(14, 1fr); --cw: 25px; --wr: 12px; }
  :host([size=large]) { --wave: 50px; --g1: 4px; --sg: 5px; --grid1: repeat(5, 41px); --grid2: repeat(5, 41px); --cw: 36px; --wr: 0px; }
  header { padding-right: var(--wr); }
  .body { padding-left: 3px; padding-right: var(--wr); }
  :host([size=large]) .body { padding-left: 4px; }
  sample-view { height: var(--wave); }
  .g { display: grid; grid-template-columns: var(--grid1); margin-top: var(--g1); }
  .g.two { grid-template-columns: var(--grid2); border-top: 1px solid #77726f; margin-top: var(--sg); padding-top: 0; }
  .c { display: flex; flex-direction: column; width: var(--cw); line-height: var(--lh); white-space: nowrap; }
  .c > span { height: var(--lh); } .c.e { justify-content: flex-end; gap: var(--sg); }
  .line { box-shadow: -2px 0 0 -1px #77726f; }
  .flt { display: grid; grid-template-columns: 9px 30px; gap: 3px 2px; } .flt button { font: 700 6px/7px Inter, sans-serif; border-color: #c5bfbe #77726f #77726f #c5bfbe; height: 9px; }
  .flt input { appearance: none; width: 9px; height: 9px; border: 1px solid #4a4645; }
  .two2 { display: grid; grid-template-columns: 1fr 1fr; gap: 2px; }
  .d { color: #77726f; }
  .tight { border-left-width: 0; border-right-width: 0; }
`, el => {
  const big = el.getAttribute('size') === 'large';
  const k = (l, v, t, x = '') => `<dial-knob label="${l}" val="${v}" value="${t}" ${x}></dial-knob>`;
  const bt = (t, c = '', s = '') => `<button class="${c}"${t ? '' : ' aria-label="Amount"'} style="${s}">${t}</button>`;
  const sl = (l, t) => `<select aria-label="${l}"><option>${t}</option></select>`;
  const c = (a, x, b, y, cl = '') => `<div class="c ${cl}"><span>${a}</span>${x}<span>${b}</span>${y}</div>`;
  return `<header><lamp-icon kind="power"></lamp-icon><h2>808 (10)</h2>${big ? '' : '<lamp-icon kind="swap"></lamp-icon><lamp-icon kind="save"></lamp-icon>'}</header>
  <div class="body"><sample-view ${big ? 'part-view' : ''}></sample-view>
  <div class="g">${k('Start', 0, '0.00 %')}${k('Loop', 100, '100 %', 'tone="#d5d9e8" dim')}${k('Length', 100, '100 %', 'lit')}${k('Fade', 0, '0.00 %', 'tone="#77726f" dim')}<div class="c e">${bt('Loop')}${bt('Snap', 'y')}</div>
  ${big ? '' : `<div class="flt line"><i></i><button>Volume</button><input type="checkbox" aria-label="Filter"><button>Filter</button><input type="checkbox" aria-label="Pitch"><button>Pitch</button></div>${k('Attack', 0, '0.00 ms')}${k('Decay', 50, '300 ms', 'lit')}${k('Sustain', 100, '0.0 dB', 'lit')}${k('Release', 100, '60.0 s', 'lit')}<i></i>${c('LFO', bt('0.00 %', 'tight'), 'Rand', bt('0.0 %', 'w'), 'line')}${k('Pan', 50, 'C', 'lit')}${c('Volume', bt('-12.0 d', 'tight', 'background:linear-gradient(to right,#ff6a2a 45%,var(--box) 0)'), 'LFO', bt('0.00 %', 'tight'), 'line')}`}</div>
  <div class="g two">${c('Filter', bt('On', 'y'), 'Type', sl('Filter type', 'LP12'))}${k('Freq', 100, '22.0 kHz', 'lit')}${k('Res', 22, '0.70', 'lit')}${c('Vel', bt('0.0 %', 'w'), 'Key', bt('100 %', 'o'))}${c('LFO', bt('0.00', 'w'), 'Env', bt('0'))}
  ${big ? '' : c('LFO', bt('Off'), 'Type', `<select aria-label="LFO type" style="background-color:#aca7a6"><option></option></select>`, 'line') + c('Rate', `<div class="two2">${bt('Hz', '', 'background:#88837f')}${bt('♪')}</div>`, 'Freq', bt('')) + c('Attack', bt(''), 'Key', bt('')) + c('Retrig', bt('Off', 'd'), 'Offset', bt('')) + c('Transp', bt('0 st', 'w'), 'Detune', bt('0 ct', 'w'), 'line') + c('LFO', bt('0.00 %', 'tight'), 'Env', bt('')) + c('Glide', sl('Glide', 'Off'), 'Time', bt('50.0 ms', 'tight')) + k('Spread', 0, '0 %') + c('Vel', bt('45 %', '', 'background:linear-gradient(to right,#ff6a2a 45%,var(--box) 0)'), 'Voices', `<div style="display:grid;grid-template-columns:15px 8px;gap:2px">${sl('Voices', '3')}${bt('R', 'y')}</div>`, 'line')}</div></div>`;
});

define('eq-eight', DEVICE + `
  :host { display: block; background: #d3cccb; border-radius: 4px 0 0 4px; overflow: hidden; }
  header { background: none; }
  .body { background: none; padding: 0 0 0 2px; display: grid; grid-template-columns: 29px minmax(0, 1fr); column-gap: 2px; }
  .k { background: var(--panel); border-radius: 3px; display: flex; flex-direction: column; justify-content: space-between; padding: 1px 0 2px; }
  .r { display: grid; grid-template-rows: 89px 1fr; row-gap: 2px; min-width: 0; }
  .r > svg { width: 100%; height: 89px; border-radius: 3px 0 0 3px; background: #1f212b; }
  .bands { display: flex; overflow: hidden; gap: 1px; }
  .band { flex: 0 0 30px; background: var(--panel); padding: 2px 2px; border-radius: 2px; display: flex; flex-direction: column; gap: 2px; align-items: center; }
  .band.on { background: #d3cccb; } .band select { width: 25px; } .ty { display: grid; width: 25px; } .ty > * { grid-area: 1 / 1; } .ty svg { width: 14px; height: 9px; margin-left: 1px; z-index: 1; }
  label { display: flex; gap: 5px; align-items: center; font-weight: 700; line-height: 8px; }
  input { appearance: none; width: 8px; height: 8px; border: 1px solid #4a4645; } input:checked { background: #ff5a0a; }
`, () => {
  const ty = ['M1 7q1-4 4-4h8', 'M1 8q0-5 3-5h9', 'M1 5h3q3-5 6 0h3M4 5q3 5 6 0', 'M1 5h4l3-2.500h5M5 5l3 2.500h5', 'M1 5h3q3-5 6 0h3M4 5q3 5 6 0'];
  let lines = rep(5, i => `<path d="M14 ${9.500 + i * 17.800}H154" stroke="#3b3e4a"/>`);
  [24, 29, 33, 37, 40, 44, 68, 85, 98, 108, 116, 122, 127].forEach((x, i) => lines += `<path d="M${x + .5} 0v89" stroke="${i === 5 ? '#6b6e7a' : '#2e3039'}"/>`);
  lines += '<path d="M132.500 0v89" stroke="#6b6e7a"/>';
  return `<header><lamp-icon kind="power"></lamp-icon><lamp-icon kind="play"></lamp-icon><h2>EQ Eight</h2></header>
  <div class="body"><div class="k"><dial-knob label="Freq" val="12" value="40.0 Hz"></dial-knob><dial-knob label="Gain" val="50" value="0.00 dB" tone="#77726f" dim centre></dial-knob><dial-knob label="Q" val="36" value="0.71" lit></dial-knob></div>
  <div class="r"><svg viewBox="0 0 154 89" preserveAspectRatio="xMinYMid slice" font-size="7" fill="#8d8f99" role="img" aria-label="Frequency response">${lines}<text x="5" y="12">12</text><text x="8" y="30">6</text><text x="8" y="47">0</text><text x="5" y="65">-6</text><text x="2" y="83">-12</text><text x="39" y="88">100</text><text x="127" y="88">1k</text><path d="M0 62Q14 44.500 44 44.500H160" fill="none" stroke="#e8603a" stroke-width="1.500"/><circle cx="14.500" cy="54" r="4.500" fill="#ffd61c"/><text x="12.500" y="56.500" fill="#222">1</text><circle cx="132" cy="44.500" r="4.500" fill="#ffd61c"/><text x="130" y="47" fill="#222">3</text></svg>
  <div class="bands">${ty.map((d, i) => { const on = [0, 2, 3].includes(i); return `<div class="band ${on ? 'on' : ''}"><div class="ty"><select aria-label="Band ${i + 1} type" ${on ? '' : 'style="background-color:#8d8887"'}><option></option></select>${S('14 10', `<path d="${d}"/>`)}</div><label><input type="checkbox" ${on ? 'checked' : ''}>${i + 1}</label></div>`; }).join('')}</div></div></div>`;
});

/* ---------- footer ---------- */
define('status-bar', `
  :host { display: grid; grid-template-columns: 15px minmax(0, 1fr) 138px 158px 14px; column-gap: 6px; padding: 4px 5px 6px; align-items: center; }
  :host > lamp-icon { width: 13px; height: 13px; }
  .info { border: 2px solid var(--edge); border-radius: 3px; background: var(--panel); height: 15px; line-height: 11px; padding-left: 5px; white-space: pre; margin-left: -2px; }
  .ov { border: 2px solid var(--edge); border-radius: 3px; height: 15px; background: #d3cbc9; }
  .ov svg, .map svg { width: 100%; height: 100%; }
  .map { background: #777271; height: 21px; margin: -4px 0 -2px; border-radius: 0 0 4px 4px; display: grid; grid-template-columns: 34px 1fr; align-items: center; padding: 4px 3px; }
`, () => `<lamp-icon kind="ghost"></lamp-icon><div class="info b">Kick/Bass   Start: 49.1.1   End: 57.1.1   Length: 8.0.0</div>
<div class="ov">${S('134 11', '<path d="M66 0h26v11H66z" fill="#b3ffee" stroke="none"/>' + rep(40, i => `<path d="M${(3 + i * 3.200).toFixed(1)} ${((i < 12 ? 7 : 2) + rnd() * (i < 12 ? 3 : 6)).toFixed(1)}h1" stroke="#55514f"/>`), 'preserveAspectRatio="none"')}</div>
<div class="map"><span class="b">Kick/Bass</span>${S('120 13', '<path d="M1 1h78v11H1z" fill="#b9b3b2" stroke="#000" stroke-width="1.500"/><path d="M35 2h30v5H35z" fill="#cba713" stroke="none"/>' + rep(60, i => `<path d="M${3 + i} ${(2.500 + rnd() * 8).toFixed(1)}h1.500" stroke="#6b6766" stroke-width=".8"/>`) + '<path d="M70 3h18v8H70zM94 3h9v5h-9zM107 4h7v7h-7z" fill="#1f212b" stroke="none"/><path d="M80 1h11M91 2v10M103 2v10M117 2v10" stroke="#333" stroke-width=".6"/>', 'preserveAspectRatio="none"')}</div><lamp-icon kind="up"></lamp-icon>`);

/* ---------- shell ---------- */
define('app-window', `
  :host { position: relative; margin: 36px 80px 0; background: var(--win); border-top: 2px solid #e6e4e3; }
  .main { display: grid; grid-template-columns: 263px minmax(0, 1fr); height: 455px; }
  arrange-view { margin-right: 4px; }
  .devs { margin: 4px 4px 0 6px; background: var(--edge); border-radius: 4px; padding: 4px 4px 4px 2px; display: grid; grid-template-columns: 6px minmax(0, 1fr) 3px 187px; column-gap: 2px; align-items: center; }
  .grip { width: 3px; height: 27px; background: repeating-linear-gradient(#2b2828 0 1px, #0000 1px 3px); justify-self: center; }
  .meter { width: 3px; height: 27px; background: #1d1b1b; }
  .group { display: grid; grid-template-columns: minmax(0, 495fr) minmax(0, 402fr); column-gap: 1px; background: #55514f; border: 2px solid var(--aqua); border-top-width: 1px; border-right-width: 3px; border-radius: 4px; overflow: hidden; }
  .zoom { position: absolute; left: 44px; right: 117px; top: 98px; display: grid; grid-template-columns: minmax(0, 1fr) 214px; background: var(--aqua); border: 2px solid var(--aqua); border-top: 0; border-left-width: 3px; border-right: 0; border-radius: 5px 0 0 5px; box-shadow: 9px 12px 18px #000b, 0 3px 3px #0008; overflow: hidden; z-index: 5; }
  .zoom sampler-device { border-left: 2px solid #77827f; }
`, () => `<tool-bar></tool-bar>
<div class="main"><browser-pane></browser-pane><arrange-view></arrange-view></div>
<div class="devs"><div class="grip"></div><div class="group"><drum-rack></drum-rack><sampler-device></sampler-device></div><div class="meter"></div><eq-eight></eq-eight></div>
<status-bar></status-bar>
<div class="zoom"><drum-rack size="large"></drum-rack><sampler-device size="large"></sampler-device></div>`);
</script>
</body>
</html>
